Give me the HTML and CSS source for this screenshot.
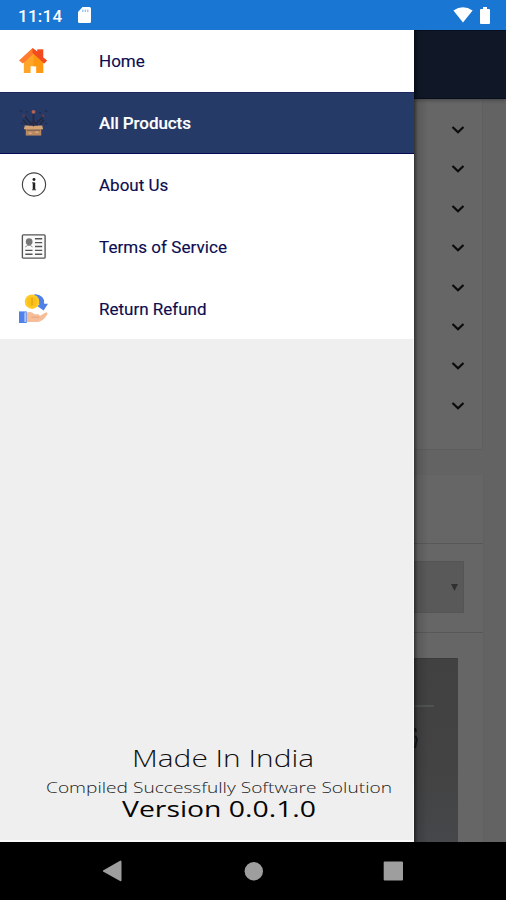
FILE: index.html
```html
<!DOCTYPE html>
<html lang="en">
<head>
<meta charset="utf-8">
<title>All Products</title>
<link rel="stylesheet" href="styles.css">
</head>
<body>
<div class="screen">
  <header class="status">
    <span class="clock">11:14</span>
    <svg class="sd" width="13" height="16" viewBox="0 0 13 16"><path d="M4.5 0H11.5Q13 0 13 1.5V14.500Q13 16 11.500 16H1.500Q0 16 0 14.500V5Z" fill="#fff"/><path d="M4.800 2.500V5M7.300 2.500V5M9.800 2.500V5" stroke="#8dbdea" stroke-width="1.200"/></svg>
    <svg class="wifi" width="20" height="16" viewBox="0 0 20 16"><path d="M.4 3.500Q10-3 19.600 3.500L10 15.500Z" fill="#fff"/></svg>
    <svg class="battery" width="10" height="17" viewBox="0 0 10 17"><path d="M3 0H7V2H9Q10 2 10 3V16Q10 17 9 17H1Q0 17 0 16V3Q0 2 1 2H3Z" fill="#fff"/></svg>
  </header>
  <main class="body">
    <aside class="drawer">
      <nav class="menu">
        <a class="item">
          <svg class="icon" viewBox="0 0 30 30"><path d="M5 14L15 6L25 14V28H18V21H12V28H5Z" fill="#ffa629"/><path d="M15 7L25 15V28H18V21H15Z" fill="#ff9811"/><path d="M0 15L14 2L19 6V3.500H25V12L29 15L26 18L15 8L4 18Z" fill="#ff7b2d"/><path d="M14 2L19 6V3.500H25V12L29 15L26 18L14 7Z" fill="#f34b20"/></svg>
          <span class="label">Home</span>
        </a>
        <a class="item active">
          <svg class="icon" viewBox="0 0 30 30"><path d="M15 6V18M12 18C12 12 7 13 6 8M18 18C18 12 24 13 25 8M9 18L4 12M21 18L26 12" fill="none" stroke="#242b46" stroke-width="2"/><path d="M1 2L3 4M27 2L29 4M7 4H9M21 5H23M2 16H4M27 16H29" stroke="#202b50" stroke-width="1.500"/><circle cx="15" cy="4" r="2" fill="#b86250"/><circle cx="5" cy="8" r="1.500" fill="#593b50"/><circle cx="25" cy="8" r="1.500" fill="#593b50"/><path d="M7 19H23V28.500H7Z" fill="#ba8962"/><path d="M6 18L14 18L15 20L16 18H24L25 22H5Z" fill="#d5a474"/><path d="M8 23H22" stroke="#765950"/><path d="M10 26H13M17 25H20" stroke="#ecc391"/><path d="M10 18L15 12L20 18Z" fill="#292b49"/></svg>
          <span class="label all">All Products</span>
        </a>
        <a class="item">
          <svg class="icon" viewBox="0 0 30 30"><circle cx="15.500" cy="15" r="12" fill="none" stroke="#444" stroke-width="1.200"/><circle cx="15.500" cy="9.800" r="1.500" fill="#222"/><path d="M15.500 13V20.500" stroke="#222" stroke-width="2.600"/><path d="M13.500 13.300H16M13.500 20.500H17.700" stroke="#444" stroke-width="1"/></svg>
          <span class="label">About Us</span>
        </a>
        <a class="item">
          <svg class="icon" viewBox="0 0 30 30"><rect x="3.500" y="3" width="23.500" height="24" rx="1" fill="#fafafa" stroke="#555" stroke-width="1.400"/><circle cx="10.500" cy="10" r="3.500" fill="#777"/><path d="M6.500 15.500Q10.500 12 14 15.500" fill="none" stroke="#888"/><path d="M16.500 7H24M16.500 11H24M16.500 15H24M6.500 19H14M16.500 19H24M6.500 23H14M16.500 23H24" stroke="#555" stroke-width="1.500"/></svg>
          <span class="label terms">Terms of Service</span>
        </a>
        <a class="item">
          <svg class="icon" viewBox="0 0 30 30"><path d="M16 0Q27 1 26 10H30L25.500 17L18 12L21 11Q21 5 16 3Z" fill="#4f80e6"/><circle cx="13.500" cy="8" r="7.500" fill="#ffca28"/><circle cx="13.500" cy="8" r="5" fill="#fbc116"/><path d="M13.500 4V12" stroke="#e5a51d" stroke-width="1.500"/><path d="M7 20Q12 17 16 21H20Q22 21 21 23L28 19Q31 20 28 23Q24 29 18 29H7Z" fill="#f5bd98"/><path d="M13 24H21" stroke="#e8a17e"/><rect x="0" y="18" width="8" height="12" fill="#4f80ec"/><path d="M6.500 19V29" stroke="#a8c4f8" stroke-width="2"/></svg>
          <span class="label">Return Refund</span>
        </a>
      </nav>
      <svg class="credits" width="414" height="102" viewBox="0 740 414 102">
        <text class="made" x="132" y="766.500" textLength="182" lengthAdjust="spacingAndGlyphs">Made In India</text>
        <text class="company" x="46" y="793" textLength="346" lengthAdjust="spacingAndGlyphs">Compiled Successfully Software Solution</text>
        <text class="version" x="122" y="817" textLength="194" lengthAdjust="spacingAndGlyphs">Version 0.0.1.0</text>
      </svg>
    </aside>
    <section class="page">
      <div class="appbar"></div>
      <div class="filters">
        <svg class="chev" viewBox="0 0 14 8"><path d="M1.500 1L7 6.300L12.500 1"/></svg>
        <svg class="chev" viewBox="0 0 14 8"><path d="M1.500 1L7 6.300L12.500 1"/></svg>
        <svg class="chev" viewBox="0 0 14 8"><path d="M1.500 1L7 6.300L12.500 1"/></svg>
        <svg class="chev" viewBox="0 0 14 8"><path d="M1.500 1L7 6.300L12.500 1"/></svg>
        <svg class="chev" viewBox="0 0 14 8"><path d="M1.500 1L7 6.300L12.500 1"/></svg>
        <svg class="chev" viewBox="0 0 14 8"><path d="M1.500 1L7 6.300L12.500 1"/></svg>
        <svg class="chev" viewBox="0 0 14 8"><path d="M1.500 1L7 6.300L12.500 1"/></svg>
        <svg class="chev" viewBox="0 0 14 8"><path d="M1.500 1L7 6.300L12.500 1"/></svg>
      </div>
      <div class="products">
        <div class="heading"></div>
        <div class="sort"><div class="select"><svg width="7" height="7" viewBox="0 0 8 8"><path d="M0 0H8L4 8Z" fill="#303030"/></svg></div></div>
        <div class="photo"><svg width="44" height="184" viewBox="0 0 44 184"><path d="M0 47H20" stroke="#555758" stroke-width="1.500"/><path d="M1 69L2 73M1 77Q4 80 2 84L1 89" fill="none" stroke="#15191e" stroke-width="2"/></svg></div>
      </div>
    </section>
  </main>
  <footer class="navbar">
    <svg width="506" height="58" viewBox="0 0 506 58"><g fill="#9e9e9e"><path d="M103 28.500L120.500 18.500Q121.500 18.500 121.500 20V38Q121.500 39.500 120.500 39.300L103 29.500Z"/><circle cx="253.800" cy="29.300" r="9.200"/><rect x="383.700" y="19.500" width="19.300" height="19" rx="1"/></g></svg>
  </footer>
</div>
</body>
</html>
```
FILE: styles.css
```css
* { box-sizing: border-box; }
body { margin: 0; background: #000; font-family: Roboto, "Liberation Sans", sans-serif; }
svg { display: block; flex: none; }
.screen { width: 506px; height: 900px; display: grid; grid-template-rows: 30px 812px 58px; overflow: hidden; }
.status { display: flex; align-items: center; padding: 0 16px 0 18px; background: #1976d2; }
.clock { width: 60px; color: #fff; font-size: 17px; font-weight: 500; letter-spacing: .25px; line-height: 30px; padding-top: 2px; white-space: nowrap; }
.wifi { margin-left: auto; margin-right: 7px; }
.body { display: grid; grid-template-columns: 414px 92px; }
.drawer { display: flex; flex-direction: column; justify-content: space-between; background: #efefef; border-bottom: 2px solid #fafafa; border-right: 1px solid #fafafa; }
.menu { background: #fff; height: 309px; margin-right: -1px; }
.item { height: 61.9px; display: flex; align-items: center; padding-left: 19px; color: #0c0c50; }
.icon { width: 29px; height: 29px; margin-right: 51px; }
.label { font-size: 17px; line-height: 24px; white-space: nowrap; -webkit-text-stroke: .15px currentColor; }
.terms { letter-spacing: .06px; }
.active { background: #263a68; color: #fff; border-top: 1px solid #1c2860; border-bottom: 1px solid #080856; }
.all { font-weight: 500; letter-spacing: -.08px; }
.credits { font-family: "Open Sans", sans-serif; margin-bottom: -2px; }
.made { font-size: 23px; font-weight: 300; fill: #111; }
.company { font-size: 15px; font-weight: 300; fill: #222; }
.version { font-size: 21.5px; font-weight: 400; fill: #050505; }
.page { background: #636363; overflow: hidden; position: relative; }
.page::before { content: ""; position: absolute; z-index: 1; inset: 0 auto 0 0; width: 14px; background: linear-gradient(90deg, rgba(0,0,0,.5), rgba(0,0,0,.12) 4px, transparent); }
.appbar { height: 69px; background: #101828; border-top: 1px solid #080f20; border-bottom: 1px solid #080f1c; box-shadow: 0 1px 4px rgba(0,0,0,.35); position: relative; }
.filters { width: 69px; height: 351px; padding: 27px 17px 0 0; display: flex; flex-direction: column; align-items: flex-end; gap: 31.4px; background: #666; border-right: 1px solid #606060; border-bottom: 1px solid #5e5e5e; }
.chev { width: 14px; height: 8px; }
.chev path { fill: none; stroke: #0b0b0b; stroke-width: 2.2; }
.products { width: 70px; height: 367px; margin-top: 25px; background: #666; border-right: 1px solid #606060; }
.heading { height: 69px; border-bottom: 1px solid #585858; }
.sort { height: 89px; padding-top: 17px; border-bottom: 1px solid #585858; }
.select { width: 50px; height: 52px; display: flex; align-items: center; justify-content: flex-end; padding-right: 5px; background: #595959; border: 1px solid #555; border-left: 0; }
.photo { width: 44px; height: 184px; margin-top: 25px; background: linear-gradient(#414141, #434343 60%, #45474a); border-top: 1px solid #3b3b3b; }
.navbar { background: #000; }
```
